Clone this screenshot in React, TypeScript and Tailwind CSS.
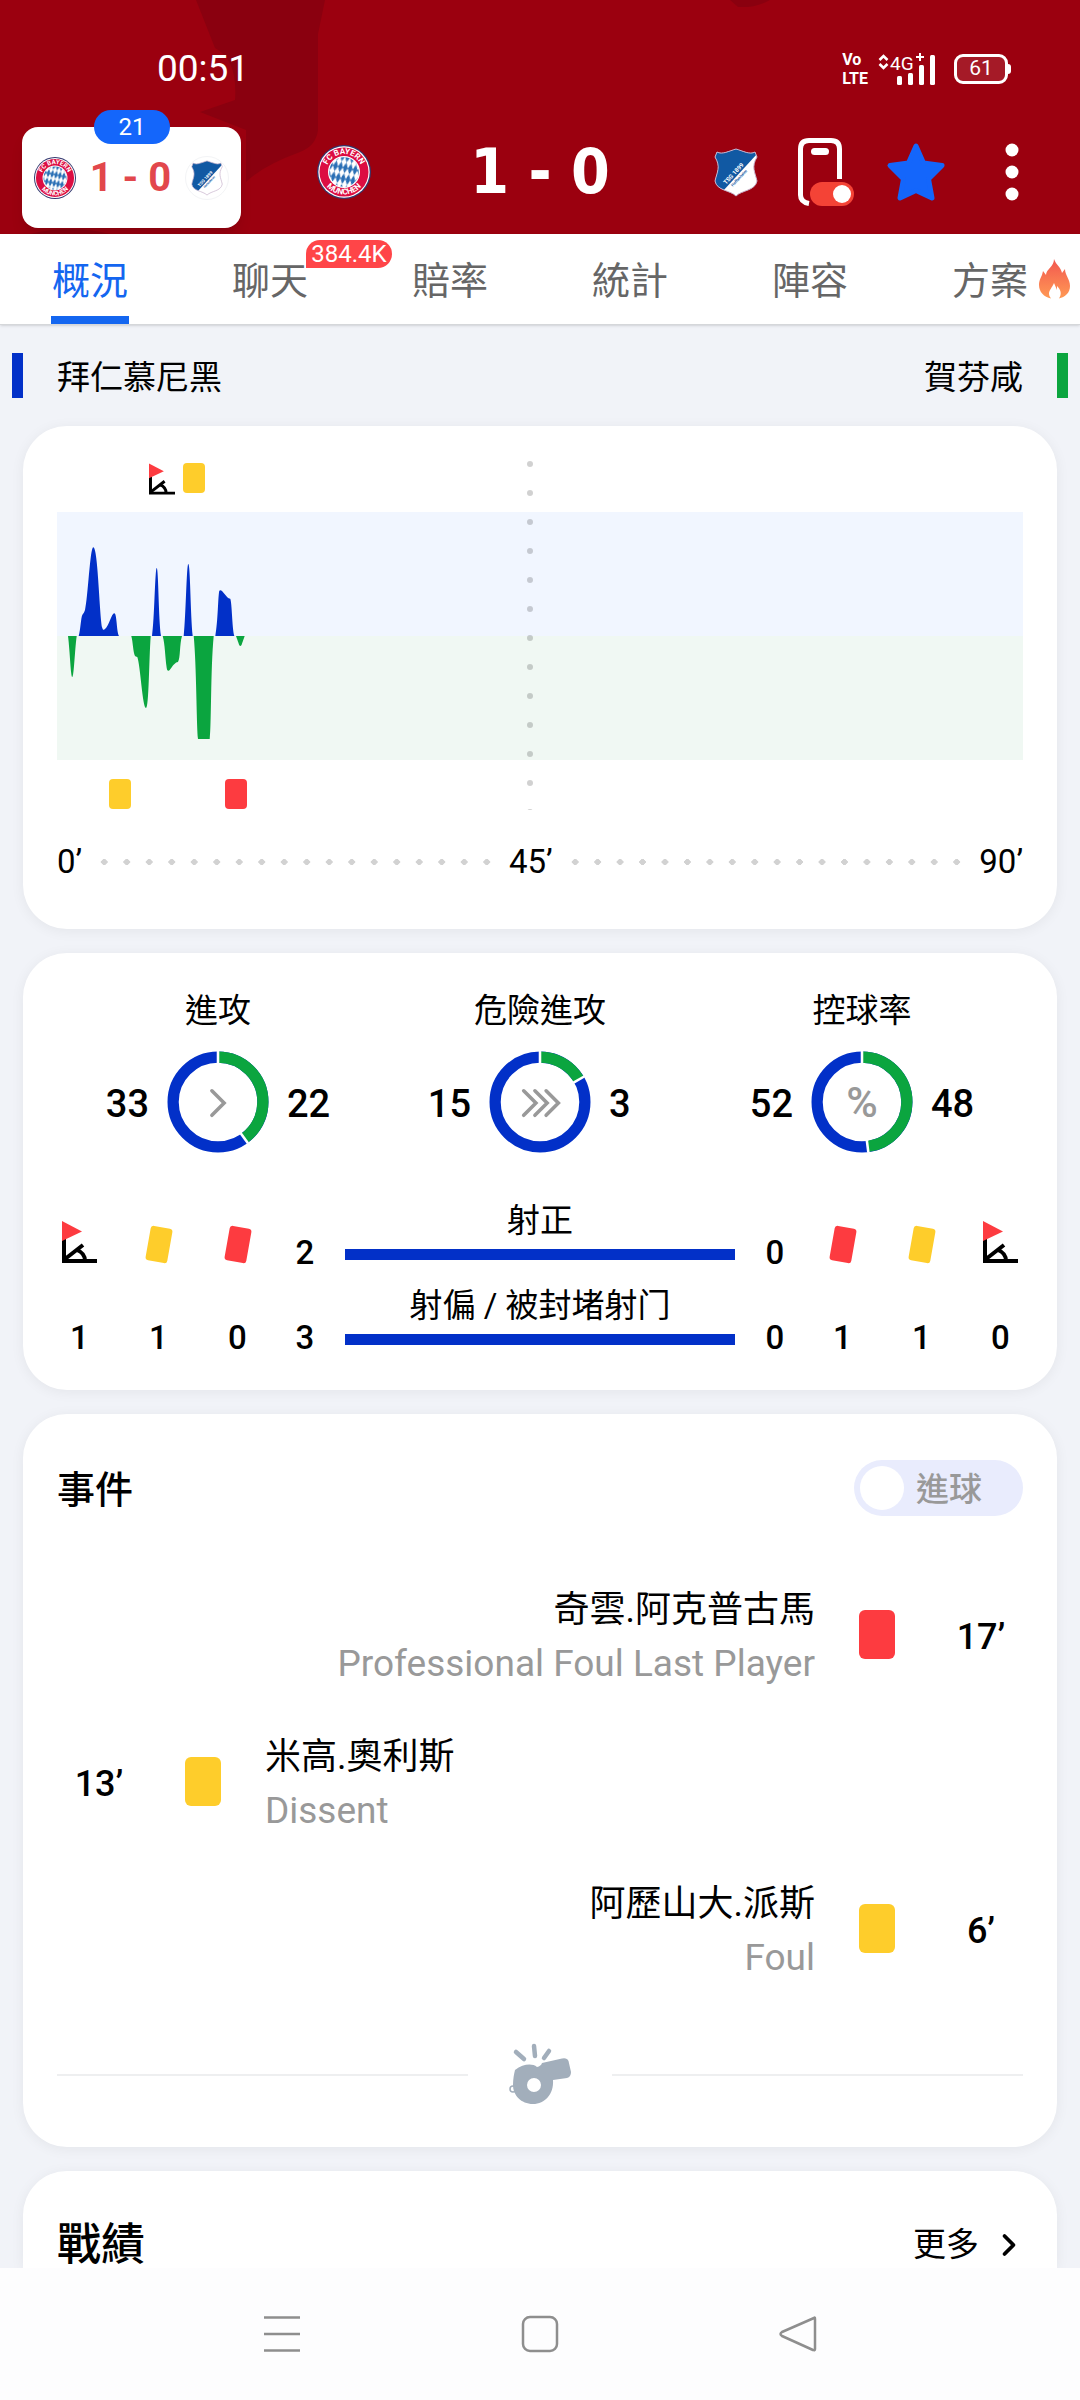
import { useState } from "react";
import { ChevronRight } from "lucide-react";
import clsx from "clsx";

const HOME_COLOR = "#0230c8";
const AWAY_COLOR = "#0ba53f";

const tabs = [
  { id: "overview", label: "概況" },
  { id: "chat", label: "聊天", badge: "384.4K" },
  { id: "odds", label: "賠率" },
  { id: "stats", label: "統計" },
  { id: "lineup", label: "陣容" },
  { id: "tips", label: "方案", hot: true },
];

const rings = [
  { label: "進攻", home: 33, away: 22, icon: "single" },
  { label: "危險進攻", home: 15, away: 3, icon: "triple" },
  { label: "控球率", home: 52, away: 48, icon: "percent" },
];

const events = [
  { minute: 17, name: "奇雲.阿克普古馬", detail: "Professional Foul Last Player", card: "red", side: "away" },
  { minute: 13, name: "米高.奧利斯", detail: "Dissent", card: "yellow", side: "home" },
  { minute: 6, name: "阿歷山大.派斯", detail: "Foul", card: "yellow", side: "away" },
];

const homePressure = [
  "M21.7 176C23.5 170 24 157 25.3 155C26.5 153 27 153 28 150C31 138 33 87.3 36.3 87.3C41 87.3 42.5 155 45.3 168C46 170.500 47 170 48 169C52 166 54.500 153.300 57.3 153.300C60 153.300 59.500 172 62 176Z",
  "M95 176C97.500 160 98 108 99.700 108C101.500 108 101.500 160 104 176Z",
  "M126.700 176C129 155 129.500 104 131.300 104C133.300 104 133.500 155 135.700 176Z",
  "M158.300 176C161 162 161 136 162.300 130.700Q163.500 129.500 165 131L170.300 137.300Q171.500 138.500 173.200 138.800C175 142 175 168 177.300 176Z",
];

const awayPressure = [
  "M11 176H19.700C17.800 190 17 217 15.300 217C13.700 217 13 192 11 176Z",
  "M74.300 176H93.700C92 200 92 248 89 248C85.500 248 83.500 206 80.300 197Q78.500 196.500 78 196C76 192 76 182 74.300 176Z",
  "M105.700 176H125C122.500 184 123.500 198 121 202Q119 202 117.500 204C115 206 113 211 111.300 210.700Q110 211 109.700 208C108 196 108 184 105.700 176Z",
  "M136.700 176H156.700C153.500 210 154.500 264 152.700 279H141C139.500 264 139.500 205 136.700 176Z",
  "M179 176H187.700L184.500 185Q183.300 187 182.200 185Z",
];

function BayernCrest({ id, className }: { id: string; className?: string }) {
  return (
    <svg viewBox="0 0 54 54" className={className} aria-hidden="true">
      <defs>
        <pattern id={`${id}-lozenge`} width="5" height="11" patternUnits="userSpaceOnUse" patternTransform="rotate(12)">
          <rect width="5" height="11" fill="#fff" />
          <path d="M2.500 0L5 5.500L2.500 11L0 5.500Z" fill="#2a6fb5" />
        </pattern>
        <path id={`${id}-top`} d="M9 27A18 18 0 0 1 45 27" />
        <path id={`${id}-bottom`} d="M4.500 27A22.500 22.500 0 0 0 49.500 27" />
      </defs>
      <circle cx="27" cy="27" r="27" fill="#34386f" />
      <circle cx="27" cy="27" r="25.700" fill="#fff" />
      <circle cx="27" cy="27" r="24.500" fill="#dc0d42" />
      <circle cx="27" cy="27" r="16" fill="#fff" />
      <circle cx="27" cy="27" r="14.800" fill={`url(#${id}-lozenge)`} />
      <g fill="#fff" fontFamily="Roboto, sans-serif" fontSize="8" fontWeight="700" textAnchor="middle">
        <text>
          <textPath href={`#${id}-top`} startOffset="50%">FC BAYERN</textPath>
        </text>
        <text>
          <textPath href={`#${id}-bottom`} startOffset="50%">MÜNCHEN</textPath>
        </text>
      </g>
    </svg>
  );
}

function HoffenheimCrest({ id, className }: { id: string; className?: string }) {
  const shield = "M3 4C8 7 15 3 22 1C29 3 36 7 41 4L43 9C37 19 41 24 43 33C41 43 28 42 22 48C16 42 3 43 1 33C3 24 7 19 1 9Z";
  return (
    <svg viewBox="0 0 44 49" className={className} aria-hidden="true">
      <defs>
        <clipPath id={`${id}-shield`}>
          <path d={shield} />
        </clipPath>
      </defs>
      <g clipPath={`url(#${id}-shield)`}>
        <rect width="44" height="49" fill="#fff" />
        <path d="M0 0H44V5L9 43L0 45Z" fill="#1159a3" />
        <g fontFamily="Roboto, sans-serif" fontWeight="700" textAnchor="middle">
          <text transform="translate(21 27) rotate(-47)" fill="#fff" fontSize="6">TSG 1899</text>
          <text transform="translate(26 31) rotate(-47)" fill="#1159a3" fontSize="4">Hoffenheim</text>
        </g>
      </g>
      <path d={shield} fill="none" stroke="#c9b4cd" strokeWidth="1" />
    </svg>
  );
}

function CornerFlag({ className, ...rest }: React.SVGProps<SVGSVGElement>) {
  return (
    <svg viewBox="0 0 35 42" className={className} aria-hidden="true" {...rest}>
      <path d="M2 18V40H35" fill="none" stroke="#000" strokeWidth="4" />
      <path d="M3 38L21 24M15 29Q23 32 23 40" fill="none" stroke="#000" strokeWidth="4" />
      <path d="M0 0L20 10.500L0 20Z" fill="#fd3b40" />
    </svg>
  );
}

function TiltedCard({ color }: { color: "red" | "yellow" }) {
  return (
    <span className="flex h-[38px] items-center">
      <span
        className={clsx("h-[35px] w-[22px] rotate-10 rounded-[3px]", color === "red" ? "bg-[#fd3b40]" : "bg-[#fecd2b]")}
      />
    </span>
  );
}

function StatusBar() {
  return (
    <div className="relative flex h-[110px] items-start justify-between pr-[69px] pl-[157px] pt-[47px] text-white">
      <span className="text-[37px] leading-[44px]">00:51</span>
      <div className="flex h-[44px] items-center">
        <span className="flex flex-col text-[16px] leading-[19px] font-bold">
          <span>Vo</span>
          <span>LTE</span>
        </span>
        <svg width="58" height="34" viewBox="0 0 58 34" className="ml-[10px] overflow-visible" fill="#fff" aria-hidden="true">
          <path d="M1.500 8L5.500 4L9.500 8M1.500 12L5.500 16L9.500 12" fill="none" stroke="#fff" strokeWidth="2.600" />
          <text x="12" y="18" fontSize="19" fontFamily="Roboto, sans-serif">4G</text>
          <path d="M38 5H46M42 1V9" stroke="#fff" strokeWidth="2" />
          <rect x="19" y="24" width="5" height="9" rx="1.500" />
          <rect x="30" y="21" width="5" height="12" rx="1.500" />
          <rect x="41" y="13" width="5" height="20" rx="1.500" />
          <rect x="52" y="3" width="5" height="30" rx="1.500" />
        </svg>
        <span className="ml-[18px] flex h-[30px] w-[54px] items-center justify-center rounded-[9px] border-3 border-white bg-white/10 text-[21px]">
          61
        </span>
        <span className="h-[10px] w-[3px] rounded-r bg-white" />
      </div>
    </div>
  );
}

function MatchHeader() {
  return (
    <header className="relative bg-[#9b000f]">
      <svg width="340" height="234" viewBox="0 0 340 234" className="absolute top-0 left-0" aria-hidden="true">
        <path d="M196 0H325L318 34V130Q316 146 300 152Q262 166 246 182V130L200 112L235 100Q238 60 215 48Z" fill="#8a000f" />
        <path d="M30 234Q70 224 110 234Z" fill="#8a000f" />
      </svg>
      <svg width="60" height="10" viewBox="0 0 60 10" className="absolute top-0 left-[720px]" aria-hidden="true">
        <path d="M10 0H50Q36 8 18 7Z" fill="#8a000f" />
      </svg>
      <StatusBar />
      <div className="relative flex items-start pt-[17px] pb-[6px] pl-[22px]">
        <div className="relative flex h-[101px] w-[219px] items-center justify-between rounded-2xl bg-white px-[12px] shadow-lg">
          <BayernCrest id="mini" className="h-[42px] w-[42px]" />
          <span className="text-[40px] font-bold text-[#e2474c]">1 - 0</span>
          <span className="flex h-[44px] w-[44px] items-center justify-center rounded-full border border-gray-100">
            <HoffenheimCrest id="mini-away" className="h-[36px] w-[32px]" />
          </span>
          <span className="absolute -top-[17px] left-[72px] flex h-[34px] w-[76px] items-center justify-center rounded-full bg-[#1466fb] text-[24px] text-white">
            21
          </span>
        </div>
        <div className="flex h-[90px] flex-1 items-center pr-[56px] pl-[76px]">
          <BayernCrest id="main" className="h-[54px] w-[54px]" />
          <span className="flex-1 pr-[5px] text-center font-['DejaVu_Sans_Condensed','DejaVu_Sans'] text-[62px] leading-[72px] font-bold text-white">
            1 - 0
          </span>
          <HoffenheimCrest id="main-away" className="h-[49px] w-[44px]" />
          <button className="ml-[40px]" aria-label="懸浮比分">
            <svg width="56" height="68" viewBox="0 0 56 68">
              <path
                d="M41.500 41V11Q41.500 2.500 33 2.500H11Q2.500 2.500 2.500 11V57Q2.500 64 11 65.500"
                fill="none"
                stroke="#fff"
                strokeWidth="5"
              />
              <rect x="13" y="10" width="18" height="7" rx="3.500" fill="#fff" />
              <rect x="12" y="44" width="44" height="24" rx="12" fill="#f44336" />
              <circle cx="44" cy="56" r="9" fill="#fff" />
            </svg>
          </button>
          <button className="ml-[32px]" aria-label="收藏">
            <svg width="60" height="60" viewBox="0 0 60 60">
              <path
                d="M30 4L37.500 21L56 23.500L42.500 37L46 56L30 48.500L14 56L17.500 37L4 23.500L22.500 21Z"
                fill="#1466fb"
                stroke="#1466fb"
                strokeWidth="5"
                strokeLinejoin="round"
              />
            </svg>
          </button>
          <button className="ml-[54px]" aria-label="更多選項">
            <svg width="24" height="60" viewBox="0 0 24 60" fill="#fff">
              <circle cx="12" cy="8" r="6.500" />
              <circle cx="12" cy="30" r="6.500" />
              <circle cx="12" cy="52" r="6.500" />
            </svg>
          </button>
        </div>
      </div>
    </header>
  );
}

function TabBar() {
  const [active, setActive] = useState("overview");

  return (
    <nav className="relative grid h-[91px] grid-cols-6 border-b border-[#d5d7da] bg-white shadow-sm">
      {tabs.map((tab) => (
        <button
          key={tab.id}
          onClick={() => setActive(tab.id)}
          className={clsx(
            "relative flex items-center justify-center pt-[4px] text-[38px] leading-[56px]",
            active === tab.id ? "text-[#1466f0]" : "text-[#666]"
          )}
        >
          {tab.label}
          {active === tab.id && <span className="absolute bottom-0 h-[8px] w-[78px] bg-[#1466f0]" />}
          {tab.badge && (
            <span className="absolute top-[6px] left-[126px] flex h-[28px] w-[86px] items-center justify-center rounded-full rounded-bl-none bg-[#ff4548] text-[24px] text-white">
              {tab.badge}
            </span>
          )}
          {tab.hot && (
            <svg width="32" height="40" viewBox="0 0 32 40" className="absolute top-[25px] right-[9px]" aria-hidden="true">
              <defs>
                <linearGradient id="flame" x1="0" y1="0" x2="0" y2="1">
                  <stop offset="0" stopColor="#f2564f" />
                  <stop offset="1" stopColor="#ff9a55" />
                </linearGradient>
              </defs>
              <path
                d="M15 0C17 6 22 8 23 14L26 10C26 16 31 20 31 27C31 34 26 38 20 39.500C23 35 22 31 18 27V31L15 24C13 29 10 31 10 35Q10 37.500 12 39.500C5 38 0 33 0 26C0 20 3 18 4 12L7 16C7 10 15 8 15 0Z"
                fill="url(#flame)"
              />
            </svg>
          )}
        </button>
      ))}
    </nav>
  );
}

function MomentumCard() {
  return (
    <section className="rounded-[44px] bg-white px-[34px] pt-[34px] pb-[45px] shadow-[0_2px_14px_rgba(0,0,0,0.06)]">
      <svg viewBox="0 0 966 350" className="block h-auto w-full" aria-label="比賽走勢">
        <rect y="52" width="966" height="124" fill="#f1f6ff" />
        <rect y="176" width="966" height="124" fill="#f0f8f3" />
        {Array.from({ length: 13 }, (_, i) => (
          <circle key={i} cx="473" cy={4 + i * 29} r="3" fill="#000" fillOpacity="0.18" />
        ))}
        {homePressure.map((d) => (
          <path key={d} d={d} fill={HOME_COLOR} />
        ))}
        {awayPressure.map((d) => (
          <path key={d} d={d} fill={AWAY_COLOR} />
        ))}
        <CornerFlag x="92" y="3" width="26" height="32" />
        <rect x="126" y="3" width="22" height="30" rx="4" fill="#fecd2b" />
        <rect x="52" y="319" width="22" height="30" rx="4" fill="#fecd2b" />
        <rect x="168" y="319" width="22" height="30" rx="4" fill="#fd3b40" />
      </svg>
      <div className="mt-[30px] flex items-center text-[33px] leading-[44px] text-black">
        <span>0’</span>
        <span className="mx-[11px] h-[8px] flex-1 bg-[radial-gradient(circle,#d2d2d2_3px,transparent_3px)] bg-[length:23px_8px] bg-repeat-round" />
        <span>45’</span>
        <span className="mx-[11px] h-[8px] flex-1 bg-[radial-gradient(circle,#d2d2d2_3px,transparent_3px)] bg-[length:23px_8px] bg-repeat-round" />
        <span>90’</span>
      </div>
    </section>
  );
}

function StatRing({ home, away, icon }: { home: number; away: number; icon: string }) {
  const share = away / (home + away);
  return (
    <svg viewBox="-50 -50 100 100" className="h-[102px] w-[102px]">
      <circle r="44" fill="none" stroke={HOME_COLOR} strokeWidth="11" />
      <circle
        r="44"
        fill="none"
        stroke={AWAY_COLOR}
        strokeWidth="11"
        pathLength={1}
        strokeDasharray={`${share} 1`}
        transform="rotate(-90)"
      />
      <path d="M0 -36V-50" stroke="#fff" strokeWidth="2.500" />
      <path d="M0 -36V-50" stroke="#fff" strokeWidth="2.500" transform={`rotate(${share * 360})`} />
      <g fill="none" stroke="#999" strokeWidth="3.500" strokeLinecap="round">
        {icon === "single" && <path d="M-6 -11L6 1L-6 13" />}
        {icon === "triple" && <path d="M-16 -11L-4 1L-16 13M-5 -11L7 1L-5 13M6 -11L18 1L6 13" />}
      </g>
      {icon === "percent" && (
        <text y="15" fontSize="42" fill="#999" textAnchor="middle" fontFamily="Roboto, sans-serif">
          %
        </text>
      )}
    </svg>
  );
}

function ShotBar({ label }: { label: string }) {
  return (
    <div className="mx-[12px] flex flex-col">
      <span className="text-center text-[33px] leading-[44px] whitespace-nowrap">{label}</span>
      <span className="mt-[6px] h-[11px] bg-[#0230c8]" />
    </div>
  );
}

function StatsCard() {
  const iconCell = "flex items-end justify-center pb-[21px]";
  const numberCell = "flex items-end justify-center pb-[11px]";

  return (
    <section className="rounded-[44px] bg-white pt-[34px] pb-[21px] text-black shadow-[0_2px_14px_rgba(0,0,0,0.06)]">
      <div className="grid grid-cols-3 px-[34px]">
        {rings.map((ring) => (
          <div key={ring.label}>
            <h3 className="text-center text-[33px] leading-[48px]">{ring.label}</h3>
            <div className="mt-[16px] grid grid-cols-[1fr_102px_1fr] items-center gap-[18px] text-[38px] font-medium">
              <span className="pt-1 text-right">{ring.home}</span>
              <StatRing {...ring} />
              <span className="pt-1">{ring.away}</span>
            </div>
          </div>
        ))}
      </div>
      <div className="mt-[46px] grid auto-rows-[85px] grid-cols-[79px_79px_79px_56px_1fr_56px_79px_79px_79px] px-[17px] text-[33px] leading-[40px] font-medium">
        <div className={iconCell}>
          <CornerFlag className="h-[42px] w-[35px]" />
        </div>
        <div className={iconCell}>
          <TiltedCard color="yellow" />
        </div>
        <div className={iconCell}>
          <TiltedCard color="red" />
        </div>
        <div className={numberCell}>2</div>
        <div className="font-normal">
          <ShotBar label="射正" />
        </div>
        <div className={numberCell}>0</div>
        <div className={iconCell}>
          <TiltedCard color="red" />
        </div>
        <div className={iconCell}>
          <TiltedCard color="yellow" />
        </div>
        <div className={iconCell}>
          <CornerFlag className="h-[42px] w-[35px]" />
        </div>

        <div className={numberCell}>1</div>
        <div className={numberCell}>1</div>
        <div className={numberCell}>0</div>
        <div className={numberCell}>3</div>
        <div className="font-normal">
          <ShotBar label="射偏 / 被封堵射门" />
        </div>
        <div className={numberCell}>0</div>
        <div className={numberCell}>1</div>
        <div className={numberCell}>1</div>
        <div className={numberCell}>0</div>
      </div>
    </section>
  );
}

function EventRow({ event }: { event: (typeof events)[number] }) {
  const away = event.side === "away";
  return (
    <li className={clsx("flex h-[147px] items-center", away && "flex-row-reverse")}>
      <span className="w-[84px] pt-1 text-center text-[36px] font-medium">{event.minute}’</span>
      <span
        className={clsx(
          "mx-[44px] h-[49px] w-[36px] rounded-md",
          event.card === "red" ? "bg-[#fd3b40]" : "bg-[#fecd2b]"
        )}
      />
      <div className={clsx("flex flex-col pt-1", away && "text-right")}>
        <span className="text-[36px] leading-[54px]">{event.name}</span>
        <span className="text-[37px] leading-[54px] text-[#999]">{event.detail}</span>
      </div>
    </li>
  );
}

function EventsCard() {
  const [goalsOnly, setGoalsOnly] = useState(false);

  return (
    <section className="rounded-[44px] bg-white px-[34px] pt-[44px] pb-[40px] text-black shadow-[0_2px_14px_rgba(0,0,0,0.06)]">
      <div className="flex items-center justify-between">
        <h2 className="pt-1 text-[38px] leading-[56px] font-medium">事件</h2>
        <label className="flex h-[56px] w-[169px] items-center rounded-full bg-[#e9ecfd] px-[6px] text-[33px] font-medium text-[#999]">
          <input
            type="checkbox"
            checked={goalsOnly}
            onChange={(e) => setGoalsOnly(e.target.checked)}
            className="mr-[12px] h-[44px] w-[44px] appearance-none rounded-full bg-white"
          />
          <span className="pt-1">進球</span>
        </label>
      </div>
      <ul className="mt-[43px]">
        {events.map((event) => (
          <EventRow key={event.minute} event={event} />
        ))}
      </ul>
      <div className="mt-[41px] flex items-center">
        <span className="h-[2px] flex-1 bg-[#eeeff0]" />
        <svg width="144" height="64" viewBox="9 -1 144 64" aria-hidden="true">
          <g fill="none" stroke="#a2aebb" strokeWidth="4.500" strokeLinecap="round">
            <path d="M65 15L57 8M76 12L75 2M85 14L90 7" />
          </g>
          <path
            d="M56 26C64 20 73 19 78 23Q82 22 83 19L103 14.500Q108 13.500 109.500 17L112 28Q112 33 108 34L94 36C95 50 86 60 74 60C62 60 54 51 54 41C54 35 55 30 56 26ZM75 34A7 7 0 1 0 75 48A7 7 0 1 0 75 34Z"
            fill="#a2aebb"
            fillRule="evenodd"
          />
          <circle cx="54" cy="45" r="3" fill="none" stroke="#a2aebb" strokeWidth="1.500" />
        </svg>
        <span className="h-[2px] flex-1 bg-[#eeeff0]" />
      </div>
    </section>
  );
}

function SystemNav() {
  return (
    <nav className="flex h-[132px] items-center justify-center gap-[218px] bg-[#fdfdfe]">
      <button aria-label="最近">
        <svg width="40" height="40" viewBox="0 0 40 40" fill="none" stroke="#8e8e8e" strokeWidth="2.500">
          <path d="M2 3.500H38M2 20H38M2 36.500H38" />
        </svg>
      </button>
      <button aria-label="主畫面">
        <svg width="40" height="40" viewBox="0 0 40 40" fill="none" stroke="#8e8e8e" strokeWidth="2.500">
          <rect x="3" y="3" width="34" height="34" rx="7" />
        </svg>
      </button>
      <button aria-label="返回">
        <svg width="40" height="40" viewBox="0 0 40 40" fill="none" stroke="#8e8e8e" strokeWidth="2.500" strokeLinejoin="round">
          <path d="M36 4Q37 3 37 5V35Q37 37 35 36L4 22Q1 20 4 18Z" />
        </svg>
      </button>
    </nav>
  );
}

export default function App() {
  return (
    <div className="flex min-h-screen flex-col bg-[#f1f3f8] font-['Roboto','Noto_Sans_CJK_TC',sans-serif]">
      <MatchHeader />
      <TabBar />
      <div className="flex items-center justify-between px-[12px] pt-[28px] pb-[28px] text-[33px] leading-[45px] text-black">
        <div className="flex items-center gap-[34px]">
          <span className="h-[45px] w-[11px] bg-[#0230c8]" />
          <span className="h-[45px] pt-[2px]">拜仁慕尼黑</span>
        </div>
        <div className="flex items-center gap-[34px]">
          <span className="h-[45px] pt-[2px]">賀芬咸</span>
          <span className="h-[45px] w-[11px] bg-[#0ba53f]" />
        </div>
      </div>
      <main className="flex flex-1 flex-col gap-[24px] px-[23px]">
        <MomentumCard />
        <StatsCard />
        <EventsCard />
        <section className="flex flex-1 items-start justify-between rounded-t-[44px] bg-white px-[34px] pt-[52px] text-black shadow-[0_2px_14px_rgba(0,0,0,0.06)]">
          <h2 className="text-[44px] leading-[44px] font-medium">戰績</h2>
          <a href="#record" className="-mr-1 flex items-center text-[33px] leading-[44px]">
            更多
            <ChevronRight className="ml-[12px] h-[36px] w-[36px]" strokeWidth={2.5} />
          </a>
        </section>
      </main>
      <SystemNav />
    </div>
  );
}
